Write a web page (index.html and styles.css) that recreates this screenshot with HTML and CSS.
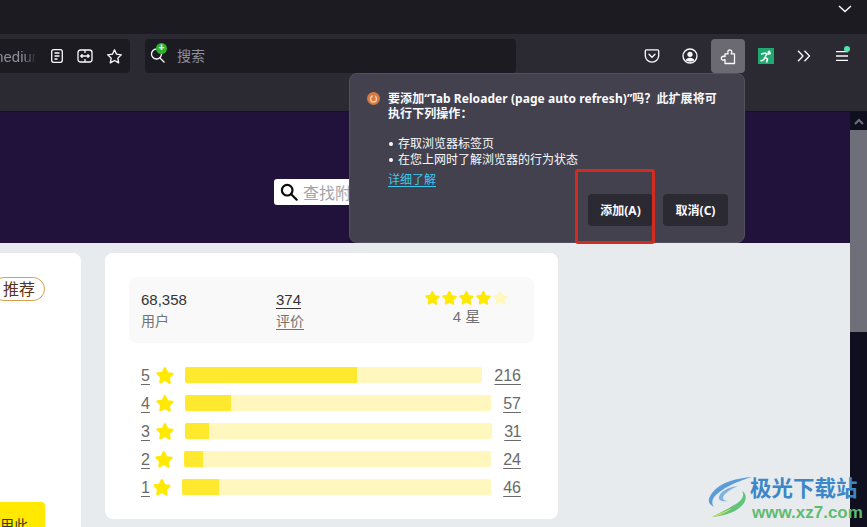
FILE: index.html
```html
<!DOCTYPE html>
<html lang="zh-CN">
<head>
    <meta charset="UTF-8">
    <meta name="viewport" content="width=device-width, initial-scale=1.0">
    <title>Tab Reloader (page auto refresh)</title>
    <link rel="stylesheet" href="styles.css">
</head>
<body>
    <svg class="defs" width="0" height="0">
        <symbol id="star" viewBox="0 0 24 24">
            <path d="M12 1.600c.7 0 1.200.4 1.500 1l2.600 5.600 6 .8c1.400.2 1.900 1.800.9 2.700l-4.400 4.200 1.100 6c.2 1.300-1.200 2.300-2.400 1.700L12 20.100l-5.300 2.900c-1.200.6-2.600-.4-2.400-1.700l1.100-6L1 11.100c-1-.9-.5-2.500.9-2.700l6-.8 2.600-5.600c.3-.6.800-1 1.500-1z"/>
        </symbol>
    </svg>

    <header class="chrome">
        <div class="tabbar">
            <svg class="tab-chevron" width="14" height="8" viewBox="0 0 14 8"><path d="M1 1l6 5.500L13 1" fill="none" stroke="#fbfbfe" stroke-width="1.400"/></svg>
        </div>
        <div class="toolbar">
            <div class="urlbar">
                <span class="url-text">medium</span>
                <svg class="url-icon" width="14" height="16" viewBox="0 0 14 16" fill="none" stroke="#fbfbfe" stroke-width="1.300"><rect x="1.700" y="1.700" width="10.600" height="12.600" rx="2"/><path d="M4.500 5h5M4.500 8h5M4.500 11h3"/></svg>
                <svg class="url-icon" width="16" height="16" viewBox="0 0 16 16" fill="none" stroke="#fbfbfe" stroke-width="1.300"><rect x="1" y="2" width="14" height="12" rx="2.500"/><path d="M8 2v3M8 11v3M3.800 8h8.400M5.500 6.300L3.800 8l1.700 1.700M10.500 6.300L12.200 8l-1.700 1.700"/></svg>
                <svg class="url-icon" width="17" height="17" viewBox="0 0 24 24" fill="none" stroke="#fbfbfe" stroke-width="1.900"><path d="M12 2.500l2.900 6.200 6.700.9-4.900 4.700 1.200 6.700-5.900-3.300-5.900 3.300 1.200-6.700-4.900-4.700 6.700-.9z" stroke-linejoin="round"/></svg>
            </div>
            <div class="searchbar">
                <span class="search-glass">
                    <svg width="16" height="18" viewBox="0 0 16 18" fill="none" stroke="#fbfbfe" stroke-width="1.300"><circle cx="6.500" cy="8" r="5"/><path d="M10 12l4.500 4.500"/></svg>
                    <span class="search-badge">+</span>
                </span>
                <span>搜索</span>
            </div>
            <div class="tool-group">
                <button class="tool" type="button">
                    <svg width="16" height="16" viewBox="0 0 16 16" fill="none" stroke="#fbfbfe" stroke-width="1.300"><path d="M2.500 1.800h11c.7 0 1.200.5 1.200 1.200v4.500a6.700 6.700 0 0 1-13.400 0V3c0-.7.500-1.200 1.200-1.200z"/><path d="M5 6.300l3 3 3-3" stroke-linecap="round"/></svg>
                </button>
                <button class="tool" type="button">
                    <svg width="16" height="16" viewBox="0 0 16 16"><circle cx="8" cy="8" r="7" fill="none" stroke="#fbfbfe" stroke-width="1.300"/><circle cx="8" cy="6.300" r="2.600" fill="#fbfbfe"/><path d="M3.500 12.500c.8-2 2.500-2.800 4.500-2.800s3.700.8 4.500 2.800c-2.500 1.500-6.500 1.500-9 0z" fill="#fbfbfe"/></svg>
                </button>
                <button class="tool tool-on" type="button">
                    <svg width="16" height="17" viewBox="0 0 16 17" fill="none" stroke="#fbfbfe" stroke-width="1.300" stroke-linejoin="round"><path d="M5 15.500h9.500V5.800h-3.300c.6-1 .8-1.600.5-2.500-.4-1.100-2-1.700-3.200-.9-1 .7-1 1.600-.4 3.400H5v2.900c-1.200-.6-2.500-.6-3.200.3-.8 1-.5 2.300.4 2.900.8.500 1.700.3 2.800-.3z"/></svg>
                </button>
                <button class="tool" type="button">
                    <svg width="16" height="16" viewBox="0 0 16 16"><rect width="16" height="16" fill="#1fa971"/><circle cx="11" cy="4" r="1.500" fill="#fff"/><path d="M3 6.200l4-1.200 2 1.200 4-.6M8.500 6.500L7 9.500l2.500 1.500-1 3.500M7 9.500L5.500 12 2.500 13" fill="none" stroke="#fff" stroke-width="1.500"/></svg>
                </button>
                <button class="tool" type="button">
                    <svg width="14" height="12" viewBox="0 0 14 12" fill="none" stroke="#fbfbfe" stroke-width="1.300"><path d="M1 .8L6 6l-5 5.200M7.500.8l5 5.200-5 5.200"/></svg>
                </button>
                <button class="tool tool-menu" type="button">
                    <svg width="12" height="10" viewBox="0 0 12 10" stroke="#fbfbfe" stroke-width="1.300"><path d="M0 .7h12M0 5h12M0 9.300h12"/></svg>
                    <span class="menu-dot"></span>
                </button>
            </div>
        </div>
        <div class="bookmarks"></div>
    </header>

    <div class="viewport">
        <main class="page">
            <section class="hero">
                <div class="addon-search">
                    <svg width="18" height="18" viewBox="0 0 18 18" fill="none" stroke="#0c0c0d" stroke-width="2.200"><circle cx="7.200" cy="7.200" r="5.300"/><path d="M11.200 11.200l5.500 5.500" stroke-linecap="round"/></svg>
                    <span class="addon-search-text">查找附加组件</span>
                </div>
            </section>
            <section class="content">
                <div class="card card-side">
                    <span class="pill">推荐</span>
                    <span class="use-btn">用此</span>
                </div>
                <div class="card card-rating">
                    <div class="stats">
                        <div class="stat">
                            <div class="stat-num">68,358</div>
                            <div class="stat-label">用户</div>
                        </div>
                        <div class="stat">
                            <a class="stat-num" href="#">374</a>
                            <a class="stat-label" href="#">评价</a>
                        </div>
                        <div class="stat stat-stars">
                            <div class="stars">
                                <svg class="star"><use href="#star"/></svg>
                                <svg class="star"><use href="#star"/></svg>
                                <svg class="star"><use href="#star"/></svg>
                                <svg class="star"><use href="#star"/></svg>
                                <svg class="star star-off"><use href="#star"/></svg>
                            </div>
                            <div class="stat-label">4 星</div>
                        </div>
                    </div>
                    <div class="rates">
                        <div class="rate">
                            <a class="rate-num" href="#">5</a>
                            <svg class="rate-star"><use href="#star"/></svg>
                            <div class="rate-bar"><div class="rate-fill" style="width:58%"></div></div>
                            <a class="rate-count" href="#">216</a>
                        </div>
                        <div class="rate">
                            <a class="rate-num" href="#">4</a>
                            <svg class="rate-star"><use href="#star"/></svg>
                            <div class="rate-bar"><div class="rate-fill" style="width:15%"></div></div>
                            <a class="rate-count" href="#">57</a>
                        </div>
                        <div class="rate">
                            <a class="rate-num" href="#">3</a>
                            <svg class="rate-star"><use href="#star"/></svg>
                            <div class="rate-bar"><div class="rate-fill" style="width:7.800%"></div></div>
                            <a class="rate-count rate-count-narrow" href="#">31</a>
                        </div>
                        <div class="rate">
                            <a class="rate-num rate-num-2" href="#">2</a>
                            <svg class="rate-star"><use href="#star"/></svg>
                            <div class="rate-bar"><div class="rate-fill" style="width:6.200%"></div></div>
                            <a class="rate-count" href="#">24</a>
                        </div>
                        <div class="rate">
                            <a class="rate-num rate-num-1" href="#">1</a>
                            <svg class="rate-star"><use href="#star"/></svg>
                            <div class="rate-bar"><div class="rate-fill" style="width:12%"></div></div>
                            <a class="rate-count" href="#">46</a>
                        </div>
                    </div>
                </div>
            </section>
        </main>
        <div class="scrollbar">
            <div class="scroll-up">
                <svg width="10" height="7" viewBox="0 0 10 7" fill="none" stroke="#6f6f7a" stroke-width="2"><path d="M1 6l4-4 4 4"/></svg>
            </div>
            <div class="scroll-thumb"></div>
        </div>
    </div>

    <div class="popup">
        <div class="popup-main">
            <svg class="popup-icon" width="13" height="13" viewBox="0 0 13 13"><circle cx="6.500" cy="6.500" r="6.500" fill="#d9783c"/><circle cx="6.500" cy="7" r="3" fill="none" stroke="#f6cdb0" stroke-width="1.400"/><path d="M6.500 2l2 3h-3z" fill="#d9783c"/></svg>
            <div class="popup-body">
                <p class="popup-title">要添加“Tab Reloader (page auto refresh)”吗？此扩展将可执行下列操作：</p>
                <ul class="popup-list">
                    <li>存取浏览器标签页</li>
                    <li>在您上网时了解浏览器的行为状态</li>
                </ul>
                <a class="popup-link" href="#">详细了解</a>
            </div>
        </div>
        <div class="popup-actions">
            <button class="popup-btn" type="button">添加(A)</button>
            <button class="popup-btn" type="button">取消(C)</button>
        </div>
    </div>

    <div class="red-box"></div>

    <div class="watermark">
        <svg class="watermark-logo" width="44" height="40" viewBox="0 0 44 40">
            <path d="M44 0C30 1 12 5 4 16c-5 7-4 11 2 14-3-4-2-9 3-13C18 9 31 4 44 0z" fill="#5b9bd8"/>
            <path d="M30 9c-9 1-18 5-19 11-.6 4 4 5 9 4-3 0-5-1-5-3 0-4 8-9 15-12z" fill="#7fb2dc"/>
            <path d="M34 14c3 4 0 9-6 13-6 3.500-14 8-24 13 12-1 26-5 32-14 3-5 2-10-2-12z" fill="#62c47a"/>
            <path d="M4 40c7-1 14-4 20-9-6 3-14 6-20 9z" fill="#d3dc5a"/>
        </svg>
        <div class="watermark-text">
            <div class="watermark-cn">极光下载站</div>
            <div class="watermark-url">www.xz7.com</div>
        </div>
    </div>
</body>
</html>
```

FILE: styles.css
```css
* { box-sizing: border-box; }
html, body { height: 100%; }
body { margin: 0; height: 527px; overflow: hidden; position: relative; background: #1c1b22; font-family: "Liberation Sans", "Noto Sans CJK SC", sans-serif; }
a { color: inherit; text-underline-offset: 3px; }
.defs { position: absolute; }

.tabbar { height: 34px; background: #1c1b22; display: flex; justify-content: flex-end; padding: 5px 15px 0 0; }
.tab-chevron { display: block; }
.toolbar { height: 39px; background: #2b2a33; display: flex; align-items: flex-end; padding-right: 8px; }
.urlbar { width: 130px; height: 34px; background: #1c1b22; border-radius: 0 4px 4px 0; display: flex; align-items: center; justify-content: flex-end; padding-right: 7px; overflow: hidden; }
.url-text { flex: 1; color: #8f8f9d; font-size: 15px; white-space: nowrap; margin-left: -9px; -webkit-mask-image: linear-gradient(to right, #000 70%, transparent 100%); mask-image: linear-gradient(to right, #000 70%, transparent 100%); overflow: hidden; }
.url-icon { margin-left: 13px; flex: none; }
.searchbar { width: 371px; height: 34px; margin-left: 15px; background: #1c1b22; border-radius: 4px; display: flex; align-items: center; padding: 0 0 2px 5px; gap: 10px; color: #8f8f9d; font-size: 14px; }
.search-glass { position: relative; display: flex; width: 17px; height: 18px; }
.search-badge { position: absolute; top: -3px; left: 6px; width: 11px; height: 11px; border-radius: 50%; background: #2fb32f; color: #fff; font-size: 10px; line-height: 10px; text-align: center; font-weight: bold; }
.tool-group { margin-left: auto; display: flex; gap: 4px; }
.tool { width: 34px; height: 34px; border: none; border-radius: 4px; background: none; padding: 0; display: flex; align-items: center; justify-content: center; position: relative; }
.tool-on { background: #6b6a72; }
.menu-dot { position: absolute; top: 7px; right: 9px; width: 6px; height: 6px; border-radius: 50%; background: #54e5a8; }
.bookmarks { height: 39px; background: #2b2a33; border-bottom: 1px solid #15141a; }

.viewport { display: flex; height: 415px; }
.page { width: 850px; background: #e8ebee; overflow: hidden; }
.hero { height: 131px; background: #20123a; padding: 67px 0 0 274px; }
.addon-search { width: 150px; height: 26px; background: #fff; border-radius: 3px; display: flex; align-items: center; gap: 5px; padding-left: 6px; }
.addon-search-text { color: #a3a3a8; font-size: 16px; white-space: nowrap; }
.content { display: flex; gap: 24px; padding-top: 10px; }
.card { background: #fff; border-radius: 8px; }
.card-side { width: 81px; height: 400px; border-radius: 0 8px 8px 0; padding: 24px 36px 0 0; display: flex; flex-direction: column; align-items: flex-end; overflow: hidden; }
.pill { height: 24px; flex: none; padding: 0 9px 0 10px; border: 1px solid #d8a04e; border-radius: 12px; color: #5b3217; font-size: 16px; line-height: 23px; white-space: nowrap; }
.use-btn { margin-top: 201px; width: 60px; height: 40px; flex: none; background: #ffe900; border-radius: 4px; color: #333; font-size: 14px; text-align: right; padding: 12px 17px 0 0; white-space: nowrap; }
.card-rating { width: 453px; height: 266px; padding: 24px; }

.stats { display: grid; grid-template-columns: repeat(3, 1fr); height: 66px; background: #f9f9fa; border-radius: 8px; }
.stat { padding: 14px 12px 0; }
.stat-num { display: block; width: max-content; color: #333; font-size: 15px; line-height: 18px; }
.stat-label { display: block; width: max-content; margin-top: 3px; color: #737373; font-size: 14px; line-height: 18px; }
.stat-stars { display: flex; flex-direction: column; align-items: center; padding-top: 13px; }
.stat-stars .stat-label { margin-top: 3px; font-size: 15px; }
.stars { display: flex; gap: 2px; }
.star { width: 15px; height: 15px; fill: #ffe900; }
.star-off { fill: #fff7bd; }

.rates { margin-top: 24px; display: flex; flex-direction: column; gap: 12px; padding: 0 13px 0 12px; }
.rate { display: flex; align-items: center; height: 16px; color: #6a6a6a; font-size: 16px; line-height: 19px; }
.rate-num { flex: none; width: 9px; margin: 1px 6px 0 0; }
.rate-num-2 { width: 8px; }
.rate-num-1 { width: 7px; margin-right: 5px; }
.rate-star { flex: none; width: 18px; height: 18px; fill: #ffe900; margin-right: 11px; }
.rate-bar { flex: 1; height: 16px; background: #fff7bd; border-radius: 2px; overflow: hidden; }
.rate-fill { height: 100%; background: #ffe92e; }
.rate-count { flex: none; margin: 1px 0 0 12px; }
.rate-count-narrow { letter-spacing: -.5px; }

.scrollbar { width: 17px; background: #100f20; }
.scroll-up { height: 18px; display: flex; align-items: center; justify-content: center; }
.scroll-thumb { height: 202px; background: #6f6f7a; }

.popup { position: absolute; left: 349px; top: 73px; width: 396px; height: 170px; background: #42414d; border: 1px solid #52515d; border-radius: 8px; color: #fbfbfe; font-family: "Noto Sans", "Noto Sans CJK SC", sans-serif; font-size: 12px; }
.popup-main { display: flex; padding: 17px 26px 0 17px; }
.popup-icon { flex: none; margin: 1px 8px 0 0; }
.popup-title { margin: 0; font-weight: bold; line-height: 15px; letter-spacing: .07px; }
.popup-list { margin: 15px 0 0; padding: 0; list-style: none; line-height: 16px; }
.popup-list li { display: flex; align-items: center; gap: 5px; }
.popup-list li::before { content: ""; width: 4px; height: 4px; margin-left: 1px; border-radius: 50%; background: #fbfbfe; flex: none; }
.popup-link { display: block; width: max-content; margin-top: 4px; color: #3cc8ee; line-height: 16px; text-underline-offset: 2px; }
.popup-actions { position: absolute; right: 16px; bottom: 16px; display: flex; gap: 10px; }
.popup-btn { width: 65px; height: 32px; border: none; border-radius: 4px; background: #2b2a33; color: #fbfbfe; font: bold 12px "Noto Sans", "Noto Sans CJK SC", sans-serif; padding: 0; }

.red-box { position: absolute; left: 575px; top: 169px; width: 80px; height: 75px; border: 3px solid #d22c20; border-radius: 3px; }

.watermark { position: absolute; left: 708px; top: 477px; display: flex; }
.watermark-logo { flex: none; }
.watermark-text { margin: -2px 0 0 -2px; }
.watermark-cn { color: #3c87c8; font-size: 21.500px; font-weight: bold; line-height: 24px; font-family: "Noto Sans CJK SC", sans-serif; white-space: nowrap; }
.watermark-url { color: #5fbb72; font-size: 17px; font-weight: bold; line-height: 20px; margin: 4px 0 0 2px; white-space: nowrap; }
```
